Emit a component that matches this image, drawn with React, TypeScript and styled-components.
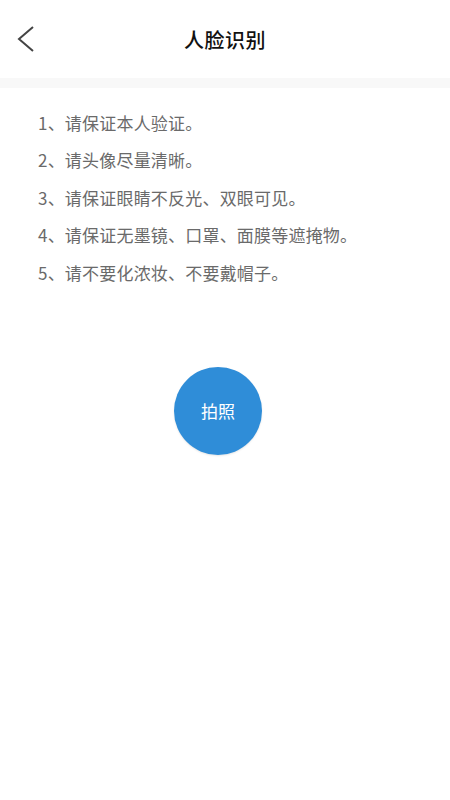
import React from "react";
import styled, { createGlobalStyle } from "styled-components";

const Global = createGlobalStyle`
  html, body { margin: 0; padding: 0; background: #fff; }
  body { font-family: "Noto Sans CJK SC", "Noto Sans", sans-serif; }
`;

const Page = styled.div`
  width: 450px;
  min-height: 800px;
  background: #fff;
  display: flex;
  flex-direction: column;
`;

const Header = styled.header`
  height: 78px;
  display: grid;
  grid-template-columns: 60px 1fr 60px;
  align-items: center;
  box-sizing: border-box;
`;

const BackButton = styled.button`
  border: 0;
  background: none;
  padding: 0 0 0 16px;
  display: flex;
  align-items: center;
  height: 100%;
  cursor: pointer;
`;

const Title = styled.h1`
  margin: 0;
  text-align: center;
  font-size: 20px;
  font-weight: 500;
  color: #111;
  letter-spacing: 0.5px;
`;

const Divider = styled.div`
  height: 10px;
  background: #f8f8f8;
`;

const List = styled.ol`
  list-style: none;
  margin: 0;
  padding: 22px 0 0 38px;
  display: flex;
  flex-direction: column;
  gap: 11.4px;
`;

const Item = styled.li`
  font-size: 17px;
  line-height: 26px;
  color: #6a6a6a;
  letter-spacing: 0.2px;
`;

const ButtonArea = styled.div`
  display: flex;
  padding: 81px 0 0 174px;
`;

const ShootButton = styled.button`
  width: 88px;
  height: 88px;
  border-radius: 50%;
  border: 0;
  background: #2f8dd8;
  color: #fff;
  font-family: "Noto Sans CJK SC", sans-serif;
  font-size: 17px;
  box-shadow: 0 1px 2px rgba(0, 0, 0, 0.1);
  cursor: pointer;
`;

const tips = [
  "1、请保证本人验证。",
  "2、请头像尽量清晰。",
  "3、请保证眼睛不反光、双眼可见。",
  "4、请保证无墨镜、口罩、面膜等遮掩物。",
  "5、请不要化浓妆、不要戴帽子。",
];

export default function App() {
  return (
    <Page>
      <Global />
      <Header>
        <BackButton aria-label="back">
          <svg width="20" height="28" viewBox="0 0 20 28">
            <path d="M17 2 L3 14 L17 26" fill="none" stroke="#444" strokeWidth="2" />
          </svg>
        </BackButton>
        <Title>人脸识别</Title>
        <div />
      </Header>
      <Divider />
      <List>
        {tips.map((t) => (
          <Item key={t}>{t}</Item>
        ))}
      </List>
      <ButtonArea>
        <ShootButton>拍照</ShootButton>
      </ButtonArea>
    </Page>
  );
}
